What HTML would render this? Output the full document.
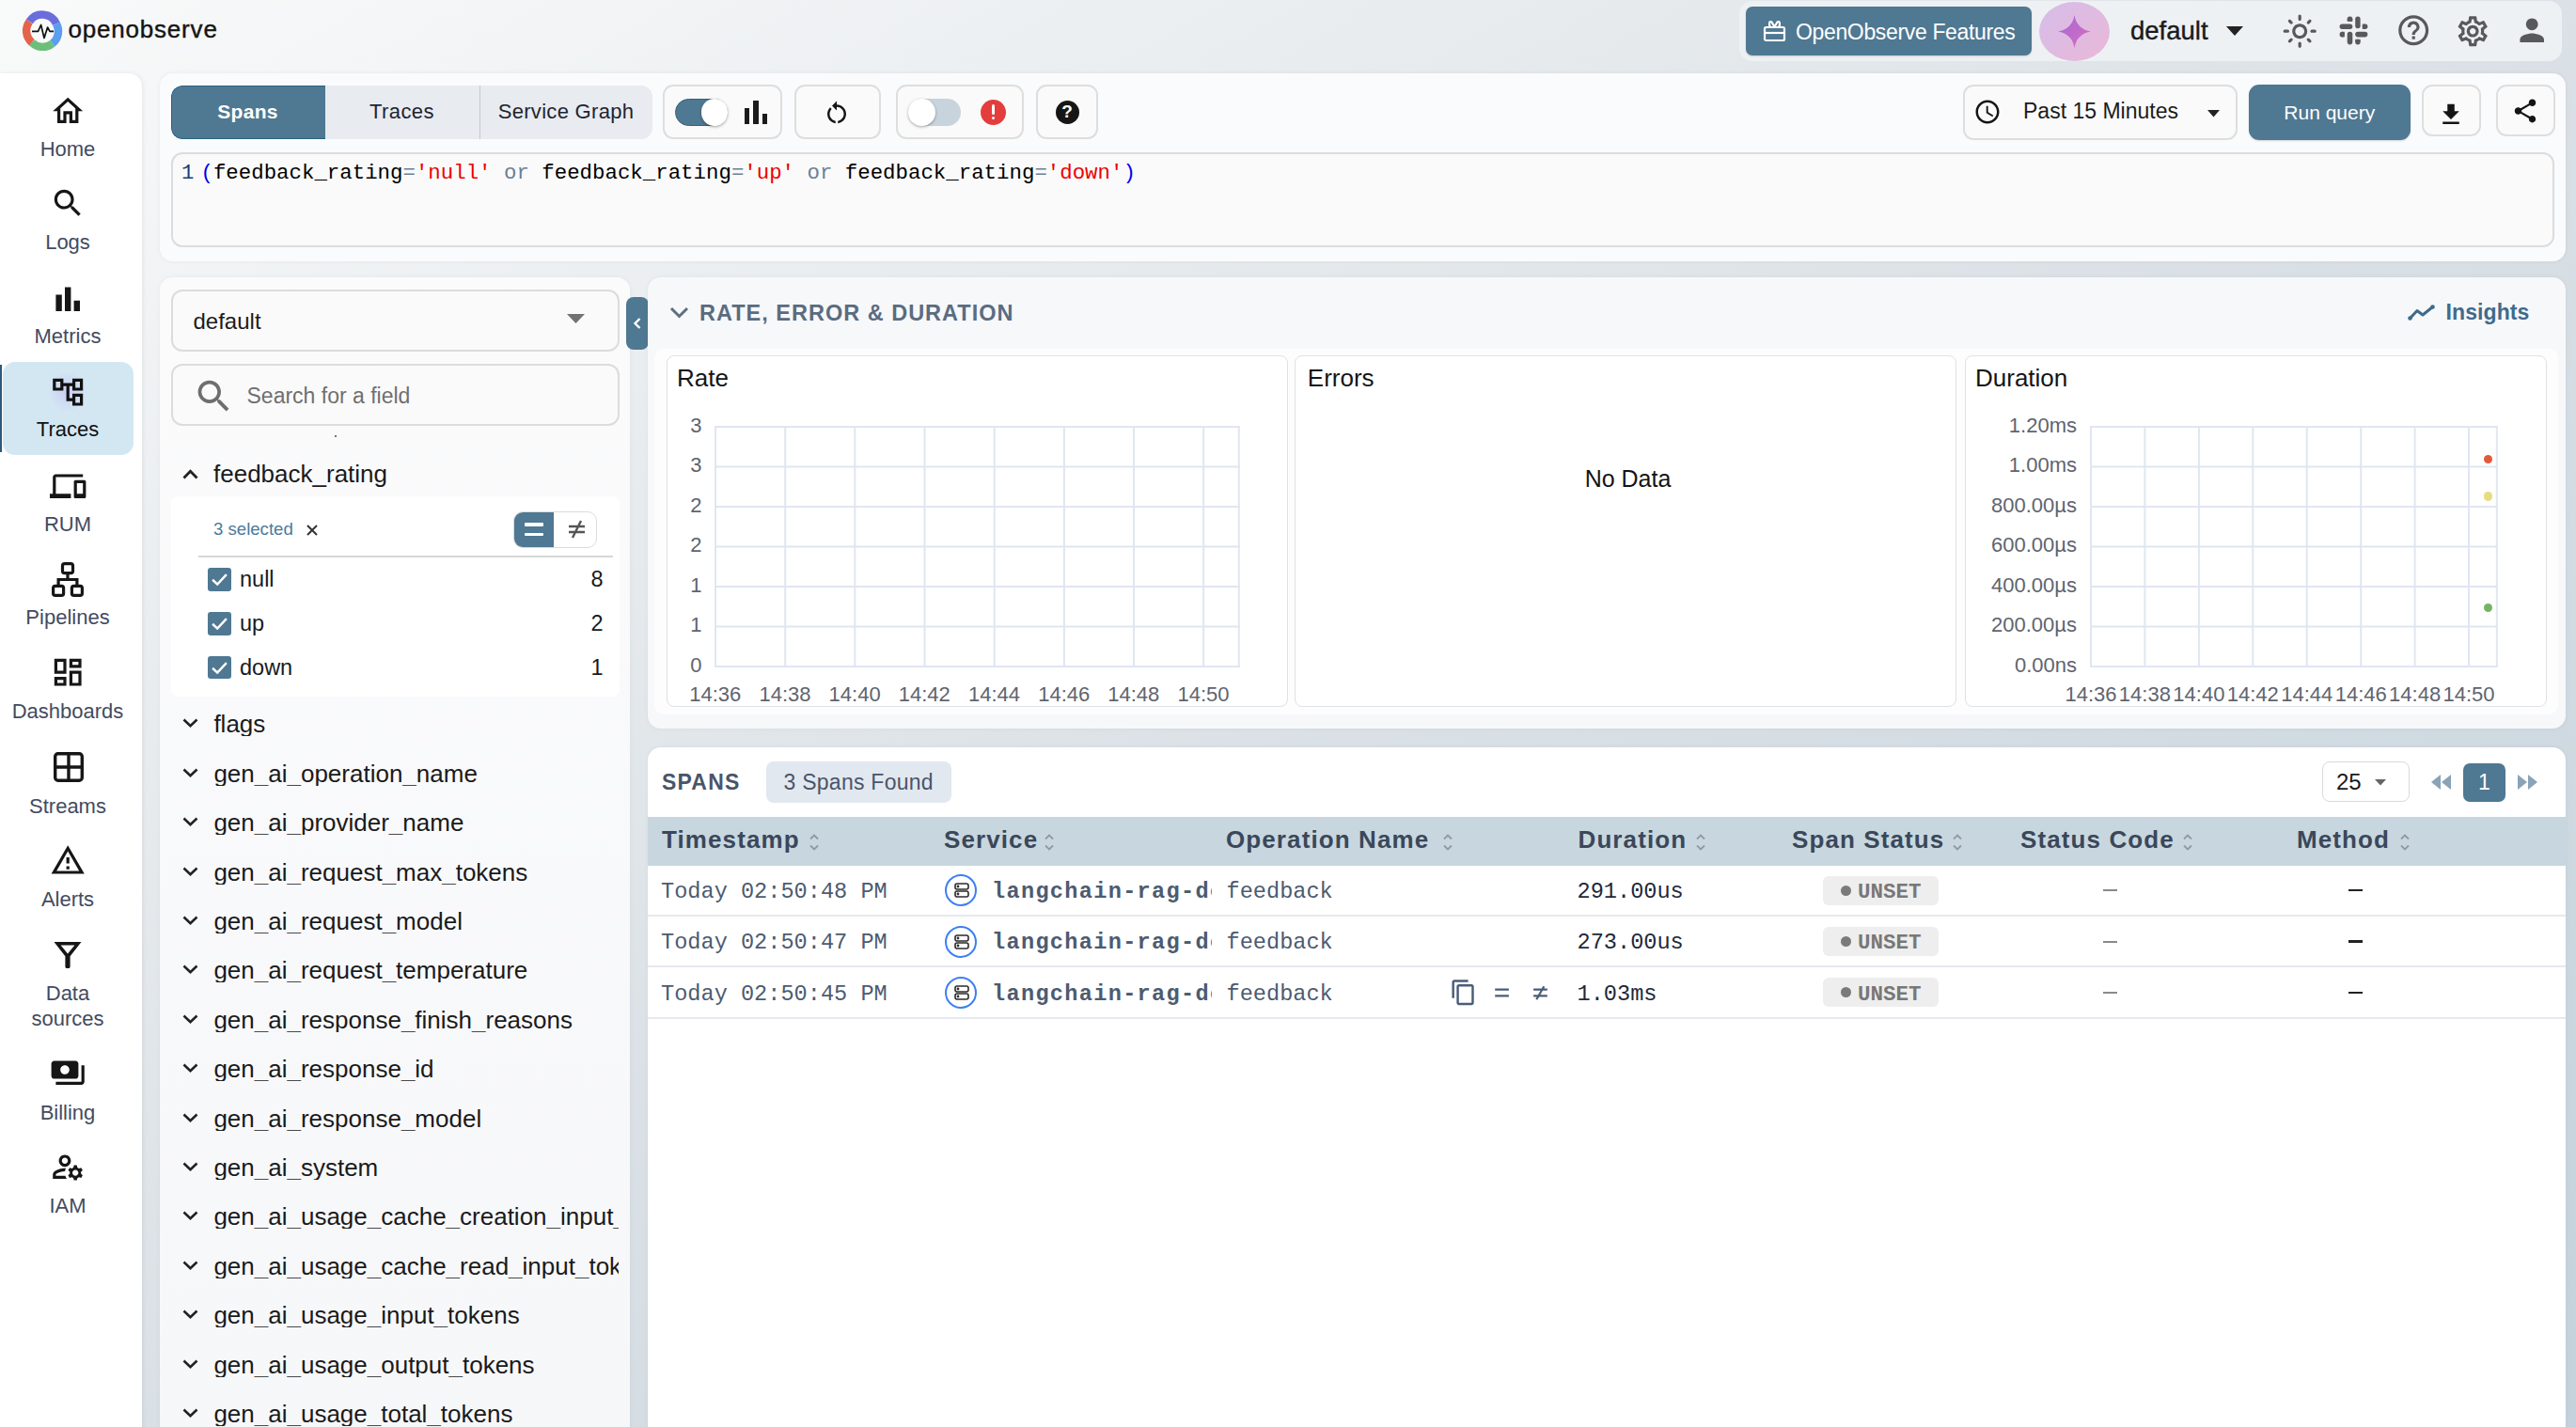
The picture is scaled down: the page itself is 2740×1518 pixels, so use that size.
<!DOCTYPE html>
<html><head><meta charset="utf-8">
<style>
*{box-sizing:border-box;margin:0;padding:0}
html,body{width:2740px;height:1518px;overflow:hidden}
body{position:relative;font-family:"Liberation Sans",sans-serif;color:#1f2937;
 background:linear-gradient(to bottom right,#f9fafa 0%,#dbe1e6 50%,#c3d2dc 100%)}
.a{position:absolute}
.t{position:absolute;white-space:nowrap;line-height:1}
.m{font-family:"Liberation Mono",monospace}
.panel{position:absolute;border-radius:14px}
svg{position:absolute;overflow:visible}
.nt{position:absolute;left:0;width:144px;text-align:center;font-size:22px;line-height:1;color:#434b60;white-space:nowrap}

</style></head><body>
<!-- LOGO -->
<svg style="left:0;top:0" width="80" height="70" viewBox="0 0 80 70">
 <g fill="none" stroke-width="8.4">
  <path d="M31.3 22.9 A16.4 16.4 0 0 1 59.9 25.2" stroke="#6a6ddb"/>
  <path d="M59.9 25.2 A16.4 16.4 0 0 1 55.8 46.2" stroke="#5b9def"/>
  <path d="M55.8 46.2 A16.4 16.4 0 0 1 33.9 45.2" stroke="#6cbf7a"/>
  <path d="M33.9 45.2 A16.4 16.4 0 0 1 31.3 22.9" stroke="#e4634b"/>
 </g>
 <polyline points="34,33.4 40.5,33.4 43.6,26.5 47,40.5 50.6,29 53,33.4 57,33.4" fill="none" stroke="#111" stroke-width="1.7" stroke-linejoin="round"/>
</svg>
<div class="t" style="left:72.5px;top:18.4px;font-size:26px;color:#151515;-webkit-text-stroke:0.4px #151515;letter-spacing:0.8px">openobserve</div>

<!-- HEADER RIGHT BOX -->
<div class="a" style="left:1850px;top:1px;width:875px;height:64px;border-radius:14px;background:#eef1f4"></div>
<div class="a" style="left:1857px;top:7px;width:304px;height:52px;border-radius:7px;background:#4f7892;box-shadow:0 1px 2px rgba(0,0,0,.15)"></div>
<svg style="left:1875px;top:20px" width="26" height="26" viewBox="0 0 26 26">
 <g fill="none" stroke="#fff" stroke-width="2.2">
  <rect x="2" y="9" width="21" height="14" rx="1.5"/>
  <line x1="2" y1="15" x2="23" y2="15"/>
  <path d="M8 9 C6 5, 7 2, 9.5 3.5 L12.5 8.5 M17 9 C19 5, 18 2, 15.5 3.5 L12.5 8.5"/>
 </g>
</svg>
<div class="t" style="left:1910px;top:22.5px;font-size:23px;color:#fff;letter-spacing:-0.35px">OpenObserve Features</div>
<div class="a" style="left:2169px;top:2px;width:75px;height:63px;border-radius:50%;background:linear-gradient(135deg,#d6bde9,#e9b8d8)"></div>
<svg style="left:2189px;top:15.5px" width="35" height="35" viewBox="0 0 35 35">
 <defs><linearGradient id="stg" x1="0" y1="0" x2="1" y2="1"><stop offset="0" stop-color="#a866d6"/><stop offset="1" stop-color="#d56fc0"/></linearGradient></defs>
 <path d="M17.5 0 Q20 15 35 17.5 Q20 20 17.5 35 Q15 20 0 17.5 Q15 15 17.5 0Z" fill="url(#stg)"/>
</svg>
<div class="t" style="left:2266px;top:19px;font-size:27.5px;color:#1b1b1b;-webkit-text-stroke:0.4px #1b1b1b">default</div>
<svg style="left:2368px;top:28px" width="18" height="10" viewBox="0 0 18 10"><path d="M0 0H18L9 10Z" fill="#222"/></svg>

<svg style="left:2427.4px;top:13.8px" width="38.4" height="38.4" viewBox="0 0 24 24" fill="#58595c"><path d="M12 9c1.65 0 3 1.35 3 3s-1.35 3-3 3-3-1.35-3-3 1.35-3 3-3m0-2c-2.76 0-5 2.24-5 5s2.24 5 5 5 5-2.24 5-5-2.24-5-5-5zM2 13h2c.55 0 1-.45 1-1s-.45-1-1-1H2c-.55 0-1 .45-1 1s.45 1 1 1zm18 0h2c.55 0 1-.45 1-1s-.45-1-1-1h-2c-.55 0-1 .45-1 1s.45 1 1 1zM11 2v2c0 .55.45 1 1 1s1-.45 1-1V2c0-.55-.45-1-1-1s-1 .45-1 1zm0 18v2c0 .55.45 1 1 1s1-.45 1-1v-2c0-.55-.45-1-1-1s-1 .45-1 1zM5.99 4.58c-.39-.39-1.03-.39-1.41 0-.39.39-.39 1.03 0 1.41l1.06 1.06c.39.39 1.03.39 1.41 0s.39-1.03 0-1.41L5.99 4.58zm12.37 12.37c-.39-.39-1.03-.39-1.41 0-.39.39-.39 1.03 0 1.41l1.06 1.06c.39.39 1.03.39 1.41 0 .39-.39.39-1.03 0-1.41l-1.06-1.06zm1.06-10.96c.39-.39.39-1.03 0-1.41-.39-.39-1.03-.39-1.41 0l-1.06 1.06c-.39.39-.39 1.03 0 1.41s1.03.39 1.41 0l1.06-1.06zM7.05 18.36c.39-.39.39-1.03 0-1.41-.39-.39-1.03-.39-1.41 0l-1.06 1.06c-.39.39-.39 1.03 0 1.41s1.03.39 1.41 0l1.06-1.06z"/></svg>
<svg style="left:2488px;top:16.8px" width="31" height="31" viewBox="0 0 31 31" fill="#58595c">
 <rect x="8.7" y="0.6" width="5.6" height="5.2" rx="2.6"/><rect x="8.7" y="3" width="5.6" height="2.8"/>
 <rect x="17.2" y="0.6" width="5.4" height="12.6" rx="2.7"/>
 <rect x="0.6" y="8.6" width="13.7" height="5.3" rx="2.65"/>
 <rect x="24.8" y="8.6" width="5.6" height="5.3" rx="2.6"/><rect x="24.8" y="8.6" width="2.8" height="5.3"/>
 <rect x="17.2" y="16.8" width="13.2" height="5.6" rx="2.8"/>
 <rect x="0.6" y="16.8" width="5.2" height="5.6" rx="2.6"/><rect x="3" y="16.8" width="2.8" height="5.6"/>
 <rect x="8.7" y="16.8" width="5.6" height="13.6" rx="2.8"/>
 <rect x="17.2" y="24.8" width="5.4" height="5.6" rx="2.7"/><rect x="17.2" y="24.8" width="5.4" height="2.8"/>
</svg>
<svg style="left:2548.3px;top:13.1px" width="38.4" height="38.4" viewBox="0 0 24 24" fill="#58595c"><path d="M11 18h2v-2h-2v2zm1-16C6.48 2 2 6.48 2 12s4.48 10 10 10 10-4.48 10-10S17.52 2 12 2zm0 18c-4.41 0-8-3.59-8-8s3.59-8 8-8 8 3.59 8 8-3.59 8-8 8zm0-14c-2.21 0-4 1.79-4 4h2c0-1.1.9-2 2-2s2 .9 2 2c0 2-3 1.75-3 5h2c0-2.25 3-2.5 3-5 0-2.21-1.79-4-4-4z"/></svg>
<svg style="left:2611.3px;top:13.8px" width="38.4" height="38.4" viewBox="0 0 24 24" fill="#58595c"><path d="M19.43 12.98c.04-.32.07-.64.07-.98 0-.34-.03-.66-.07-.98l2.11-1.65c.19-.15.24-.42.12-.64l-2-3.46c-.09-.16-.26-.25-.44-.25-.06 0-.12.01-.17.03l-2.49 1c-.52-.4-1.08-.73-1.69-.98l-.38-2.65C14.46 2.18 14.25 2 14 2h-4c-.25 0-.46.18-.49.42l-.38 2.65c-.61.25-1.17.59-1.69.98l-2.49-1c-.06-.02-.12-.03-.18-.03-.17 0-.34.09-.43.25l-2 3.46c-.13.22-.07.49.12.64l2.11 1.65c-.04.32-.07.65-.07.98 0 .33.03.66.07.98l-2.11 1.65c-.19.15-.24.42-.12.64l2 3.46c.09.16.26.25.44.25.06 0 .12-.01.17-.03l2.49-1c.52.4 1.08.73 1.69.98l.38 2.65c.03.24.24.42.49.42h4c.25 0 .46-.18.49-.42l.38-2.65c.61-.25 1.17-.59 1.69-.98l2.49 1c.06.02.12.03.18.03.17 0 .34-.09.43-.25l2-3.46c.12-.22.07-.49-.12-.64l-2.11-1.65zm-1.98-1.71c.04.31.05.52.05.73 0 .21-.02.43-.05.73l-.14 1.13.89.7 1.08.84-.7 1.21-1.27-.51-1.04-.42-.9.68c-.43.32-.84.56-1.25.73l-1.06.43-.16 1.13-.2 1.35h-1.4l-.19-1.35-.16-1.13-1.06-.43c-.43-.18-.83-.41-1.23-.71l-.91-.7-1.06.43-1.27.51-.7-1.21 1.08-.84.89-.7-.14-1.13c-.03-.31-.05-.54-.05-.74s.02-.43.05-.73l.14-1.13-.89-.7-1.08-.84.7-1.21 1.27.51 1.04.42.9-.68c.43-.32.84-.56 1.25-.73l1.06-.43.16-1.13.2-1.35h1.39l.19 1.35.16 1.13 1.06.43c.43.18.83.41 1.23.71l.91.7 1.06-.43 1.27-.51.7 1.21-1.07.85-.89.7.14 1.13zM12 8c-2.21 0-4 1.79-4 4s1.79 4 4 4 4-1.79 4-4-1.79-4-4-4zm0 6c-1.1 0-2-.9-2-2s.9-2 2-2 2 .9 2 2-.9 2-2 2z"/></svg>
<svg style="left:2673.8px;top:12.7px" width="38.4" height="38.4" viewBox="0 0 24 24" fill="#58595c"><path d="M12 12c2.21 0 4-1.79 4-4s-1.79-4-4-4-4 1.79-4 4 1.79 4 4 4zm0 2c-2.67 0-8 1.34-8 4v2h16v-2c0-2.66-5.33-4-8-4z"/></svg>

<!-- NAV -->
<div class="a" style="left:0;top:78px;width:151px;height:1460px;background:#fff;border-radius:0 14px 0 0;box-shadow:1px 0 5px rgba(0,0,0,.07)"></div>
<div class="a" style="left:3px;top:385px;width:139px;height:99px;border-radius:13px;background:#d3e7f3"></div>
<div class="a" style="left:0;top:388px;width:2px;height:93px;background:#2d5a7a"></div>
<div class="a" style="left:50px;top:395px;width:44px;height:44px;border-radius:50%;background:radial-gradient(circle,rgba(200,200,245,.8),rgba(210,231,243,0) 70%)"></div>

<svg style="left:52.8px;top:99.2px" width="38.4" height="38.4" viewBox="0 0 24 24" fill="#161616"><path d="M12 5.69l5 4.5V18h-2v-6H9v6H7v-7.81l5-4.5M12 3L2 12h3v8h6v-6h2v6h6v-8h3L12 3z"/></svg>
<div class="nt" style="top:147.7px">Home</div>

<svg style="left:52.8px;top:197.2px" width="38.4" height="38.4" viewBox="0 0 24 24" fill="#161616"><path d="M15.5 14h-.79l-.28-.27C15.41 12.59 16 11.11 16 9.5 16 5.91 13.09 3 9.5 3S3 5.91 3 9.5 5.91 16 9.5 16c1.61 0 3.09-.59 4.23-1.57l.27.28v.79l5 4.99L20.49 19l-4.99-5zm-6 0C7.01 14 5 11.99 5 9.5S7.01 5 9.5 5 14 7.01 14 9.5 11.99 14 9.5 14z"/></svg>
<div class="nt" style="top:246.9px">Logs</div>

<svg style="left:52.8px;top:298.6px" width="38.4" height="38.4" viewBox="0 0 24 24" fill="#161616"><path d="M4 9h4v11H4zm12 4h4v7h-4zm-6-9h4v16h-4z"/></svg>
<div class="nt" style="top:347.2px">Metrics</div>

<svg style="left:52.8px;top:398px" width="38.4" height="38.4" viewBox="0 0 24 24" fill="#111"><path d="M22 11V3h-7v3H9V3H2v8h7V8h2v10h4v3h7v-8h-7v3h-2V8h2v3h7zM7 9H4V5h3v4zm10 6h3v4h-3v-4zm0-10h3v4h-3V5z"/></svg>
<div class="nt" style="top:446.2px;color:#111">Traces</div>

<svg style="left:52.8px;top:498.3px" width="38.4" height="38.4" viewBox="0 0 24 24" fill="#161616"><path d="M4 6h18V4H4c-1.1 0-2 .9-2 2v11H0v3h14v-3H4V6zm19 2h-6c-.55 0-1 .45-1 1v10c0 .55.45 1 1 1h6c.55 0 1-.45 1-1V9c0-.55-.45-1-1-1zm-1 9h-4v-7h4v7z"/></svg>
<div class="nt" style="top:547.4px">RUM</div>

<svg style="left:55px;top:598px" width="34" height="37" viewBox="0 0 34 37" fill="none" stroke="#161616" stroke-width="3.2">
 <rect x="11.5" y="1.6" width="11" height="10" rx="2.2"/>
 <rect x="1.6" y="25.4" width="11" height="10" rx="2.2"/>
 <rect x="21.4" y="25.4" width="11" height="10" rx="2.2"/>
 <path d="M17 11.6V18.5M7.1 25.4V18.5H26.9V25.4"/>
</svg>
<div class="nt" style="top:646.4px">Pipelines</div>

<svg style="left:52.8px;top:696.2px" width="38.4" height="38.4" viewBox="0 0 24 24" fill="#161616"><path d="M19 5v2h-4V5h4M9 5v6H5V5h4m10 8v6h-4v-6h4M9 17v2H5v-2h4M21 3h-8v6h8V3zM11 3H3v10h8V3zm10 8h-8v10h8V11zm-10 4H3v6h8v-6z"/></svg>
<div class="nt" style="top:745.9px">Dashboards</div>

<svg style="left:56.5px;top:800px" width="32" height="32" viewBox="0 0 32 32" fill="none" stroke="#161616" stroke-width="3.4">
 <rect x="1.7" y="1.7" width="28.6" height="28.6" rx="3"/>
 <path d="M16 1.7V30.3M1.7 16H30.3"/>
</svg>
<div class="nt" style="top:846.8px">Streams</div>

<svg style="left:52.8px;top:895.8px" width="38.4" height="38.4" viewBox="0 0 24 24" fill="#161616"><path d="M12 5.99L19.53 19H4.47L12 5.99M12 2L1 21h22L12 2zm1 14h-2v2h2v-2zm0-6h-2v4h2v-4z"/></svg>
<div class="nt" style="top:946px">Alerts</div>

<svg style="left:57px;top:1002px" width="30" height="28" viewBox="0 0 30 28" fill="#161616"><path d="M0.5 0H29.5L17.6 15.2V26.2C17.6 27.2 16.8 28 15.8 28H14.2C13.2 28 12.4 27.2 12.4 26.2V15.2ZM7.6 3.6L15 12.6L22.4 3.6Z" fill-rule="evenodd"/></svg>
<div class="nt" style="top:1046.4px">Data</div>
<div class="nt" style="top:1073.1px">sources</div>

<svg style="left:52.8px;top:1121.6px" width="38.4" height="38.4" viewBox="0 0 24 24" fill="#161616"><path d="M19 14V6c0-1.1-.9-2-2-2H3c-1.1 0-2 .9-2 2v8c0 1.1.9 2 2 2h14c1.1 0 2-.9 2-2zm-9-1c-1.66 0-3-1.34-3-3s1.34-3 3-3 3 1.34 3 3-1.34 3-3 3zm13-6v11c0 1.1-.9 2-2 2H4v-2h17V7h2z"/></svg>
<div class="nt" style="top:1172.9px">Billing</div>

<svg style="left:52.8px;top:1221.6px" width="38.4" height="38.4" viewBox="0 0 24 24" fill="#161616"><path d="M4 18v-.65c0-.34.16-.66.41-.81C6.1 15.53 8.03 15 10 15c.03 0 .05 0 .08.01.1-.7.3-1.37.59-1.98-.22-.02-.44-.03-.67-.03-2.42 0-4.68.67-6.61 1.82-.88.52-1.39 1.5-1.39 2.53V20h9.26c-.42-.6-.75-1.28-.97-2H4zM10 12c2.21 0 4-1.79 4-4s-1.79-4-4-4-4 1.79-4 4 1.79 4 4 4zm0-6c1.1 0 2 .9 2 2s-.9 2-2 2-2-.9-2-2 .9-2 2-2zM20.75 16c0-.22-.03-.42-.06-.63l1.14-1.01-1-1.73-1.45.49c-.32-.27-.68-.48-1.08-.63L18 11h-2l-.3 1.49c-.4.15-.76.36-1.08.63l-1.45-.49-1 1.73 1.14 1.01c-.03.21-.06.41-.06.63s.03.42.06.63l-1.14 1.01 1 1.73 1.45-.49c.32.27.68.48 1.08.63L16 21h2l.3-1.49c.4-.15.76-.36 1.08-.63l1.45.49 1-1.73-1.14-1.01c.03-.21.06-.41.06-.63zM17 18c-1.1 0-2-.9-2-2s.9-2 2-2 2 .9 2 2-.9 2-2 2z"/></svg>
<div class="nt" style="top:1272.1px">IAM</div>

<!-- QUERY PANEL -->
<div class="a" style="left:170px;top:78px;width:2559px;height:200px;background:#fafbfc;border-radius:14px;box-shadow:0 0 5px rgba(0,0,0,.06)"></div>
<!-- tabs -->
<div class="a" style="left:181.5px;top:91px;width:512px;height:57px;border-radius:12px;background:#e8ebf0;overflow:hidden">
 <div class="a" style="left:0;top:0;width:164px;height:57px;background:#4f7892;border:1.5px solid #2a6284;border-right:none;border-radius:12px 0 0 12px"></div>
 <div class="a" style="left:328px;top:0;width:1.5px;height:57px;background:#c4c9d0"></div>
</div>
<div class="t" style="left:181.5px;width:164px;text-align:center;top:108px;font-size:21px;font-weight:bold;color:#fff;letter-spacing:0.3px">Spans</div>
<div class="t" style="left:345.5px;width:164px;text-align:center;top:107.6px;font-size:22px;color:#1f2430;letter-spacing:0.4px">Traces</div>
<div class="t" style="left:510px;width:184px;text-align:center;top:107.6px;font-size:22px;color:#1f2430;letter-spacing:0.3px">Service Graph</div>

<!-- chart toggle group -->
<div class="a" style="left:705px;top:90px;width:127px;height:58px;border-radius:11px;border:2px solid #dedede;background:#fafafa"></div>
<div class="a" style="left:718px;top:105px;width:56px;height:29px;border-radius:15px;background:#4f7892;border:1.5px solid #36607c"></div>
<div class="a" style="left:745.5px;top:105px;width:28.5px;height:28.5px;border-radius:50%;background:#fff;box-shadow:0 1px 3px rgba(0,0,0,.35)"></div>
<div class="a" style="left:791.9px;top:114.8px;width:5.5px;height:16.8px;background:#1b1b1b"></div><div class="a" style="left:801.4px;top:107.4px;width:5.5px;height:24.2px;background:#1b1b1b"></div><div class="a" style="left:810.9px;top:121.3px;width:5.5px;height:10.3px;background:#1b1b1b"></div>

<!-- refresh group -->
<div class="a" style="left:844.5px;top:90px;width:92px;height:58px;border-radius:11px;border:2px solid #dedede;background:#fafafa"></div>
<svg style="left:874.8px;top:104.9px" width="30" height="30" viewBox="0 0 24 24" fill="#151515"><path d="M12 5V2L8 6l4 4V7c3.31 0 6 2.69 6 6 0 2.97-2.17 5.43-5 5.91v2.02c3.95-.49 7-3.85 7-7.93 0-4.42-3.58-8-8-8zm-6 8c0-1.65.67-3.15 1.76-4.24L6.34 7.34C4.9 8.79 4 10.79 4 13c0 4.08 3.05 7.44 7 7.93v-2.02c-2.83-.48-5-2.94-5-5.91z"/></svg>

<!-- error toggle group -->
<div class="a" style="left:952.5px;top:90px;width:136px;height:58px;border-radius:11px;border:2px solid #dedede;background:#fafafa"></div>
<div class="a" style="left:967px;top:105px;width:55px;height:29px;border-radius:15px;background:#c7d4dd"></div>
<div class="a" style="left:966px;top:105px;width:28.5px;height:28.5px;border-radius:50%;background:#fff;box-shadow:0 1px 3px rgba(0,0,0,.35)"></div>
<div class="a" style="left:1043.2px;top:105.5px;width:27px;height:27px;border-radius:50%;background:#e43d3d"></div>
<div class="a" style="left:1055.2px;top:110.5px;width:3.2px;height:11px;border-radius:1.5px;background:#fff"></div>
<div class="a" style="left:1055.2px;top:124px;width:3.2px;height:3.2px;border-radius:50%;background:#fff"></div>

<!-- help group -->
<div class="a" style="left:1101.5px;top:90px;width:66px;height:58px;border-radius:11px;border:2px solid #dedede;background:#fafafa"></div>
<div class="a" style="left:1122.5px;top:106.5px;width:25px;height:25px;border-radius:50%;background:#161616"></div>
<div class="t" style="left:1122.5px;width:25px;text-align:center;top:109px;font-size:19px;font-weight:bold;color:#fff">?</div>

<!-- time picker -->
<div class="a" style="left:2087.5px;top:90px;width:292.5px;height:58.5px;border-radius:11px;border:2px solid #dedede;background:#fafafa"></div>
<svg style="left:2098.9px;top:104px" width="30" height="30" viewBox="0 0 24 24" fill="#141414"><path d="M11.99 2C6.47 2 2 6.48 2 12s4.47 10 9.99 10C17.52 22 22 17.52 22 12S17.52 2 11.99 2zM12 20c-4.42 0-8-3.58-8-8s3.58-8 8-8 8 3.58 8 8-3.58 8-8 8zm.5-13H11v6l5.25 3.15.75-1.23-4.5-2.67z"/></svg>
<div class="t" style="left:2152px;top:107px;font-size:23px;color:#1b1b1b">Past 15 Minutes</div>
<svg style="left:2348px;top:116.5px" width="13" height="8" viewBox="0 0 13 8"><path d="M0 0H13L6.5 7.5Z" fill="#222"/></svg>

<!-- run query -->
<div class="a" style="left:2392px;top:90px;width:171.5px;height:58.5px;border-radius:11px;background:#4f7892;box-shadow:0 1px 2px rgba(0,0,0,.15)"></div>
<div class="t" style="left:2392px;width:171.5px;text-align:center;top:108.5px;font-size:21px;color:#fff">Run query</div>

<!-- download / share -->
<div class="a" style="left:2575.5px;top:90px;width:63px;height:55px;border-radius:11px;border:2px solid #dedede;background:#fafafa"></div>
<svg style="left:2592.2px;top:106.5px" width="30" height="30" viewBox="0 0 24 24" fill="#141414"><path d="M19 9h-4V3H9v6H5l7 7 7-7zM5 18v2h14v-2H5z"/></svg>
<div class="a" style="left:2654.5px;top:90px;width:63px;height:55px;border-radius:11px;border:2px solid #dedede;background:#fafafa"></div>
<svg style="left:2670.5px;top:103.2px" width="30" height="30" viewBox="0 0 24 24" fill="#141414"><path d="M18 16.08c-.76 0-1.44.3-1.96.77L8.91 12.7c.05-.23.09-.46.09-.7s-.04-.47-.09-.7l7.05-4.11c.54.5 1.25.81 2.04.81 1.66 0 3-1.34 3-3s-1.34-3-3-3-3 1.34-3 3c0 .24.04.47.09.7L8.04 9.81C7.5 9.31 6.79 9 6 9c-1.66 0-3 1.34-3 3s1.34 3 3 3c.79 0 1.5-.31 2.04-.81l7.12 4.16c-.05.21-.08.43-.08.65 0 1.61 1.31 2.92 2.92 2.92 1.61 0 2.92-1.31 2.92-2.92s-1.31-2.92-2.92-2.92z"/></svg>

<!-- query editor -->
<div class="a" style="left:182px;top:161.5px;width:2535px;height:101.5px;border-radius:12px;border:2px solid #dcdcdc;background:#fafafa"></div>
<div class="t m" style="left:193px;top:172.8px;font-size:22.4px;color:#1c3f78">1</div><div class="t m" style="left:213.5px;top:172.8px;font-size:22.4px;color:#000;white-space:pre"><span style="color:#0000ee">(</span>feedback_rating<span style="color:#6b7f94">=</span><span style="color:#e00">'null'</span> <span style="color:#6b7f94">or</span> feedback_rating<span style="color:#6b7f94">=</span><span style="color:#e00">'up'</span> <span style="color:#6b7f94">or</span> feedback_rating<span style="color:#6b7f94">=</span><span style="color:#e00">'down'</span><span style="color:#0000ee">)</span></div>

<!-- FIELD PANEL -->
<div class="a" style="left:170px;top:295px;width:499.5px;height:1260px;background:linear-gradient(180deg,#fbfbfc,#f6f7f9);border-radius:14px;box-shadow:0 0 5px rgba(0,0,0,.05)"></div>
<div class="a" style="left:181.5px;top:307.5px;width:477px;height:66px;border-radius:12px;border:2px solid #dcdcdc;background:#fafafa"></div>
<div class="t" style="left:205.5px;top:330.3px;font-size:24px;color:#1c1c1c">default</div>
<svg style="left:603px;top:334px" width="19" height="10" viewBox="0 0 19 10"><path d="M0 0H19L9.5 10Z" fill="#727272"/></svg>
<div class="a" style="left:666px;top:316px;width:23.5px;height:55.5px;border-radius:8px;background:#4f7892"></div>
<svg style="left:671px;top:336px" width="14" height="16" viewBox="0 0 14 16"><path d="M9.5 3L4.5 8L9.5 13" fill="none" stroke="#fff" stroke-width="2.4"/></svg>
<div class="a" style="left:181.5px;top:386.5px;width:477px;height:66px;border-radius:12px;border:2px solid #dcdcdc;background:#fafafa"></div>
<svg style="left:205.4px;top:399.4px" width="45" height="45" viewBox="0 0 24 24" fill="#6e6e6e"><path d="M15.5 14h-.79l-.28-.27C15.41 12.59 16 11.11 16 9.5 16 5.91 13.09 3 9.5 3S3 5.91 3 9.5 5.91 16 9.5 16c1.61 0 3.09-.59 4.23-1.57l.27.28v.79l5 4.99L20.49 19l-4.99-5zm-6 0C7.01 14 5 11.99 5 9.5S7.01 5 9.5 5 14 7.01 14 9.5 11.99 14 9.5 14z"/></svg>
<div class="t" style="left:262.5px;top:409.5px;font-size:23px;color:#6f6f6f">Search for a field</div>
<div class="a" style="left:356px;top:463px;width:2px;height:2px;background:#444;border-radius:50%"></div>

<svg style="left:194px;top:498px" width="17" height="12" viewBox="0 0 17 12"><path d="M1.5 10.5L8.5 3.2L15.5 10.5" fill="none" stroke="#222" stroke-width="2.8"/></svg>
<div class="t" style="left:227px;top:490.8px;font-size:26px;color:#1a1a1a">feedback_rating</div>

<div class="a" style="left:181.5px;top:528px;width:477px;height:213px;border-radius:8px;background:#fff"></div>
<div class="t" style="left:227px;top:553.6px;font-size:18.6px;color:#4a7b9d">3 selected</div>
<svg style="left:325px;top:557px" width="14" height="14" viewBox="0 0 14 14"><path d="M2 2L12 12M12 2L2 12" stroke="#333" stroke-width="2"/></svg>
<div class="a" style="left:545.5px;top:544px;width:89.5px;height:39px;border-radius:10px;border:1.5px solid #dcdcdc;background:#fff;overflow:hidden">
 <div class="a" style="left:0;top:0;width:42px;height:39px;background:#4f7892"></div>
</div>
<div class="a" style="left:557.5px;top:556px;width:20px;height:3.8px;background:#fff;border-radius:1px"></div>
<div class="a" style="left:557.5px;top:566.5px;width:20px;height:3.8px;background:#fff;border-radius:1px"></div>
<svg style="left:603.5px;top:553px" width="19" height="20" viewBox="0 0 19 20"><path d="M1 7H18M1 13H18M14 1L5 19" stroke="#555" stroke-width="2.4" fill="none"/></svg>
<div class="a" style="left:211px;top:591px;width:440.5px;height:1.5px;background:#d6d6d6"></div>

<div class="a" style="left:221px;top:604px;width:24.5px;height:24.5px;border-radius:3px;background:#4f7892"></div>
<svg style="left:221px;top:604px" width="24.5" height="24.5" viewBox="0 0 24 24"><path d="M5 12.5L10 17.2L19.5 7" fill="none" stroke="#fff" stroke-width="2.4"/></svg>
<div class="t" style="left:255px;top:604.9px;font-size:23.5px;color:#1a1a1a">null</div>
<div class="t" style="left:541.5px;width:100px;text-align:right;top:604.9px;font-size:23.5px;color:#1a1a1a">8</div>
<div class="a" style="left:221px;top:651px;width:24.5px;height:24.5px;border-radius:3px;background:#4f7892"></div>
<svg style="left:221px;top:651px" width="24.5" height="24.5" viewBox="0 0 24 24"><path d="M5 12.5L10 17.2L19.5 7" fill="none" stroke="#fff" stroke-width="2.4"/></svg>
<div class="t" style="left:255px;top:651.9px;font-size:23.5px;color:#1a1a1a">up</div>
<div class="t" style="left:541.5px;width:100px;text-align:right;top:651.9px;font-size:23.5px;color:#1a1a1a">2</div>
<div class="a" style="left:221px;top:697.8px;width:24.5px;height:24.5px;border-radius:3px;background:#4f7892"></div>
<svg style="left:221px;top:697.8px" width="24.5" height="24.5" viewBox="0 0 24 24"><path d="M5 12.5L10 17.2L19.5 7" fill="none" stroke="#fff" stroke-width="2.4"/></svg>
<div class="t" style="left:255px;top:698.7px;font-size:23.5px;color:#1a1a1a">down</div>
<div class="t" style="left:541.5px;width:100px;text-align:right;top:698.7px;font-size:23.5px;color:#1a1a1a">1</div>
<svg style="left:194px;top:763.3px" width="17" height="12" viewBox="0 0 17 12"><path d="M1.5 2.5L8.5 9.3L15.5 2.5" fill="none" stroke="#222" stroke-width="2.6"/></svg>
<div class="t" style="left:227.4px;top:757.3px;font-size:26px;color:#1a1a1a;width:431px;overflow:hidden">flags</div>
<svg style="left:194px;top:815.7px" width="17" height="12" viewBox="0 0 17 12"><path d="M1.5 2.5L8.5 9.3L15.5 2.5" fill="none" stroke="#222" stroke-width="2.6"/></svg>
<div class="t" style="left:227.4px;top:809.7px;font-size:26px;color:#1a1a1a;width:431px;overflow:hidden">gen_ai_operation_name</div>
<svg style="left:194px;top:868.1px" width="17" height="12" viewBox="0 0 17 12"><path d="M1.5 2.5L8.5 9.3L15.5 2.5" fill="none" stroke="#222" stroke-width="2.6"/></svg>
<div class="t" style="left:227.4px;top:862.1px;font-size:26px;color:#1a1a1a;width:431px;overflow:hidden">gen_ai_provider_name</div>
<svg style="left:194px;top:920.5px" width="17" height="12" viewBox="0 0 17 12"><path d="M1.5 2.5L8.5 9.3L15.5 2.5" fill="none" stroke="#222" stroke-width="2.6"/></svg>
<div class="t" style="left:227.4px;top:914.5px;font-size:26px;color:#1a1a1a;width:431px;overflow:hidden">gen_ai_request_max_tokens</div>
<svg style="left:194px;top:972.9px" width="17" height="12" viewBox="0 0 17 12"><path d="M1.5 2.5L8.5 9.3L15.5 2.5" fill="none" stroke="#222" stroke-width="2.6"/></svg>
<div class="t" style="left:227.4px;top:966.9px;font-size:26px;color:#1a1a1a;width:431px;overflow:hidden">gen_ai_request_model</div>
<svg style="left:194px;top:1025.3px" width="17" height="12" viewBox="0 0 17 12"><path d="M1.5 2.5L8.5 9.3L15.5 2.5" fill="none" stroke="#222" stroke-width="2.6"/></svg>
<div class="t" style="left:227.4px;top:1019.3px;font-size:26px;color:#1a1a1a;width:431px;overflow:hidden">gen_ai_request_temperature</div>
<svg style="left:194px;top:1077.7px" width="17" height="12" viewBox="0 0 17 12"><path d="M1.5 2.5L8.5 9.3L15.5 2.5" fill="none" stroke="#222" stroke-width="2.6"/></svg>
<div class="t" style="left:227.4px;top:1071.7px;font-size:26px;color:#1a1a1a;width:431px;overflow:hidden">gen_ai_response_finish_reasons</div>
<svg style="left:194px;top:1130.1px" width="17" height="12" viewBox="0 0 17 12"><path d="M1.5 2.5L8.5 9.3L15.5 2.5" fill="none" stroke="#222" stroke-width="2.6"/></svg>
<div class="t" style="left:227.4px;top:1124.1px;font-size:26px;color:#1a1a1a;width:431px;overflow:hidden">gen_ai_response_id</div>
<svg style="left:194px;top:1182.5px" width="17" height="12" viewBox="0 0 17 12"><path d="M1.5 2.5L8.5 9.3L15.5 2.5" fill="none" stroke="#222" stroke-width="2.6"/></svg>
<div class="t" style="left:227.4px;top:1176.5px;font-size:26px;color:#1a1a1a;width:431px;overflow:hidden">gen_ai_response_model</div>
<svg style="left:194px;top:1234.9px" width="17" height="12" viewBox="0 0 17 12"><path d="M1.5 2.5L8.5 9.3L15.5 2.5" fill="none" stroke="#222" stroke-width="2.6"/></svg>
<div class="t" style="left:227.4px;top:1228.9px;font-size:26px;color:#1a1a1a;width:431px;overflow:hidden">gen_ai_system</div>
<svg style="left:194px;top:1287.3px" width="17" height="12" viewBox="0 0 17 12"><path d="M1.5 2.5L8.5 9.3L15.5 2.5" fill="none" stroke="#222" stroke-width="2.6"/></svg>
<div class="t" style="left:227.4px;top:1281.3px;font-size:26px;color:#1a1a1a;width:431px;overflow:hidden">gen_ai_usage_cache_creation_input_tokens</div>
<svg style="left:194px;top:1339.7px" width="17" height="12" viewBox="0 0 17 12"><path d="M1.5 2.5L8.5 9.3L15.5 2.5" fill="none" stroke="#222" stroke-width="2.6"/></svg>
<div class="t" style="left:227.4px;top:1333.7px;font-size:26px;color:#1a1a1a;width:431px;overflow:hidden">gen_ai_usage_cache_read_input_tokens</div>
<svg style="left:194px;top:1392.1px" width="17" height="12" viewBox="0 0 17 12"><path d="M1.5 2.5L8.5 9.3L15.5 2.5" fill="none" stroke="#222" stroke-width="2.6"/></svg>
<div class="t" style="left:227.4px;top:1386.1px;font-size:26px;color:#1a1a1a;width:431px;overflow:hidden">gen_ai_usage_input_tokens</div>
<svg style="left:194px;top:1444.5px" width="17" height="12" viewBox="0 0 17 12"><path d="M1.5 2.5L8.5 9.3L15.5 2.5" fill="none" stroke="#222" stroke-width="2.6"/></svg>
<div class="t" style="left:227.4px;top:1438.5px;font-size:26px;color:#1a1a1a;width:431px;overflow:hidden">gen_ai_usage_output_tokens</div>
<svg style="left:194px;top:1496.9px" width="17" height="12" viewBox="0 0 17 12"><path d="M1.5 2.5L8.5 9.3L15.5 2.5" fill="none" stroke="#222" stroke-width="2.6"/></svg>
<div class="t" style="left:227.4px;top:1490.9px;font-size:26px;color:#1a1a1a;width:431px;overflow:hidden">gen_ai_usage_total_tokens</div>
<!-- CHARTS PANEL -->
<div class="a" style="left:689px;top:295px;width:2039.5px;height:480px;background:#f7f8fa;border-radius:14px;box-shadow:0 0 5px rgba(0,0,0,.05)"></div>
<svg style="left:712px;top:325px" width="21" height="15" viewBox="0 0 21 15"><path d="M2 3L10.5 11.5L19 3" fill="none" stroke="#5d6f82" stroke-width="3"/></svg>
<div class="t" style="left:744px;top:322.3px;font-size:23.5px;font-weight:bold;color:#5b6c80;letter-spacing:1px">RATE, ERROR &amp; DURATION</div>
<svg style="left:2560px;top:323px" width="32" height="20" viewBox="0 0 32 20"><polyline points="3.5,15.5 11,7.5 17,12 27.5,3.5" fill="none" stroke="#3f6b8b" stroke-width="3" stroke-linejoin="round"/><circle cx="3.5" cy="15.5" r="2.3" fill="#3f6b8b"/><circle cx="27.5" cy="3.5" r="2.3" fill="#3f6b8b"/></svg>
<div class="t" style="left:2601.5px;top:321px;font-size:23px;font-weight:bold;color:#3f6b8b;letter-spacing:0.1px">Insights</div>
<div class="a" style="left:696px;top:370.7px;width:2025px;height:389.5px;background:#fdfdfe;border-radius:10px"></div>

<div class="a" style="left:708.6px;top:378px;width:661px;height:374.3px;border:1.8px solid #dfe1e2;border-radius:8px;background:#fff"></div>
<div class="t" style="left:720px;top:388.5px;font-size:26px;color:#151515">Rate</div>
<div class="a" style="left:1377.2px;top:378px;width:703.8px;height:374.3px;border:1.8px solid #dfe1e2;border-radius:8px;background:#fff"></div>
<div class="t" style="left:1390.8px;top:388.5px;font-size:26px;color:#151515">Errors</div>
<div class="a" style="left:2089.5px;top:378px;width:619.5px;height:374.3px;border:1.8px solid #dfe1e2;border-radius:8px;background:#fff"></div>
<div class="t" style="left:2101px;top:388.5px;font-size:26px;color:#151515">Duration</div>
<div class="t" style="left:1631.5px;width:200px;text-align:center;top:496.8px;font-size:25px;color:#141414">No Data</div>
<svg style="left:759.8px;top:452.9px" width="560.8" height="258" fill="none" stroke="#e0e6f1" stroke-width="2"><line x1="0" y1="1.0" x2="558.8" y2="1.0"/><line x1="0" y1="43.5" x2="558.8" y2="43.5"/><line x1="0" y1="86.0" x2="558.8" y2="86.0"/><line x1="0" y1="128.5" x2="558.8" y2="128.5"/><line x1="0" y1="171.0" x2="558.8" y2="171.0"/><line x1="0" y1="213.5" x2="558.8" y2="213.5"/><line x1="0" y1="256.0" x2="558.8" y2="256.0"/><line x1="1.0" y1="0" x2="1.0" y2="257"/><line x1="75.2" y1="0" x2="75.2" y2="257"/><line x1="149.3" y1="0" x2="149.3" y2="257"/><line x1="223.5" y1="0" x2="223.5" y2="257"/><line x1="297.7" y1="0" x2="297.7" y2="257"/><line x1="371.9" y1="0" x2="371.9" y2="257"/><line x1="446.0" y1="0" x2="446.0" y2="257"/><line x1="520.2" y1="0" x2="520.2" y2="257"/><line x1="557.8" y1="0" x2="557.8" y2="257"/></svg>
<div class="t" style="left:546.5px;width:200px;text-align:right;top:441.7px;font-size:22px;color:#60646e">3</div>
<div class="t" style="left:546.5px;width:200px;text-align:right;top:484.2px;font-size:22px;color:#60646e">3</div>
<div class="t" style="left:546.5px;width:200px;text-align:right;top:526.7px;font-size:22px;color:#60646e">2</div>
<div class="t" style="left:546.5px;width:200px;text-align:right;top:569.2px;font-size:22px;color:#60646e">2</div>
<div class="t" style="left:546.5px;width:200px;text-align:right;top:611.7px;font-size:22px;color:#60646e">1</div>
<div class="t" style="left:546.5px;width:200px;text-align:right;top:654.2px;font-size:22px;color:#60646e">1</div>
<div class="t" style="left:546.5px;width:200px;text-align:right;top:696.7px;font-size:22px;color:#60646e">0</div>
<div class="t" style="left:710.8px;width:100px;text-align:center;top:728.3px;font-size:22px;color:#60646e">14:36</div>
<div class="t" style="left:785.0px;width:100px;text-align:center;top:728.3px;font-size:22px;color:#60646e">14:38</div>
<div class="t" style="left:859.1px;width:100px;text-align:center;top:728.3px;font-size:22px;color:#60646e">14:40</div>
<div class="t" style="left:933.3px;width:100px;text-align:center;top:728.3px;font-size:22px;color:#60646e">14:42</div>
<div class="t" style="left:1007.5px;width:100px;text-align:center;top:728.3px;font-size:22px;color:#60646e">14:44</div>
<div class="t" style="left:1081.7px;width:100px;text-align:center;top:728.3px;font-size:22px;color:#60646e">14:46</div>
<div class="t" style="left:1155.8px;width:100px;text-align:center;top:728.3px;font-size:22px;color:#60646e">14:48</div>
<div class="t" style="left:1230.0px;width:100px;text-align:center;top:728.3px;font-size:22px;color:#60646e">14:50</div>
<svg style="left:2223px;top:452.9px" width="435.8" height="258" fill="none" stroke="#e0e6f1" stroke-width="2"><line x1="0" y1="1.0" x2="433.8" y2="1.0"/><line x1="0" y1="43.5" x2="433.8" y2="43.5"/><line x1="0" y1="86.0" x2="433.8" y2="86.0"/><line x1="0" y1="128.5" x2="433.8" y2="128.5"/><line x1="0" y1="171.0" x2="433.8" y2="171.0"/><line x1="0" y1="213.5" x2="433.8" y2="213.5"/><line x1="0" y1="256.0" x2="433.8" y2="256.0"/><line x1="1.0" y1="0" x2="1.0" y2="257"/><line x1="58.4" y1="0" x2="58.4" y2="257"/><line x1="115.9" y1="0" x2="115.9" y2="257"/><line x1="173.3" y1="0" x2="173.3" y2="257"/><line x1="230.7" y1="0" x2="230.7" y2="257"/><line x1="288.2" y1="0" x2="288.2" y2="257"/><line x1="345.6" y1="0" x2="345.6" y2="257"/><line x1="403.0" y1="0" x2="403.0" y2="257"/><line x1="432.8" y1="0" x2="432.8" y2="257"/></svg>
<div class="t" style="left:2009px;width:200px;text-align:right;top:441.7px;font-size:22px;color:#60646e">1.20ms</div>
<div class="t" style="left:2009px;width:200px;text-align:right;top:484.2px;font-size:22px;color:#60646e">1.00ms</div>
<div class="t" style="left:2009px;width:200px;text-align:right;top:526.7px;font-size:22px;color:#60646e">800.00µs</div>
<div class="t" style="left:2009px;width:200px;text-align:right;top:569.2px;font-size:22px;color:#60646e">600.00µs</div>
<div class="t" style="left:2009px;width:200px;text-align:right;top:611.7px;font-size:22px;color:#60646e">400.00µs</div>
<div class="t" style="left:2009px;width:200px;text-align:right;top:654.2px;font-size:22px;color:#60646e">200.00µs</div>
<div class="t" style="left:2009px;width:200px;text-align:right;top:696.7px;font-size:22px;color:#60646e">0.00ns</div>
<div class="t" style="left:2174.0px;width:100px;text-align:center;top:728.3px;font-size:22px;color:#60646e">14:36</div>
<div class="t" style="left:2231.4px;width:100px;text-align:center;top:728.3px;font-size:22px;color:#60646e">14:38</div>
<div class="t" style="left:2288.9px;width:100px;text-align:center;top:728.3px;font-size:22px;color:#60646e">14:40</div>
<div class="t" style="left:2346.3px;width:100px;text-align:center;top:728.3px;font-size:22px;color:#60646e">14:42</div>
<div class="t" style="left:2403.7px;width:100px;text-align:center;top:728.3px;font-size:22px;color:#60646e">14:44</div>
<div class="t" style="left:2461.2px;width:100px;text-align:center;top:728.3px;font-size:22px;color:#60646e">14:46</div>
<div class="t" style="left:2518.6px;width:100px;text-align:center;top:728.3px;font-size:22px;color:#60646e">14:48</div>
<div class="t" style="left:2576.0px;width:100px;text-align:center;top:728.3px;font-size:22px;color:#60646e">14:50</div>
<div class="a" style="left:2642.2px;top:483.9px;width:9.2px;height:9.2px;border-radius:50%;background:#e4593a"></div>
<div class="a" style="left:2642.2px;top:523.4px;width:9.2px;height:9.2px;border-radius:50%;background:#e8dc80"></div>
<div class="a" style="left:2642.2px;top:641.9px;width:9.2px;height:9.2px;border-radius:50%;background:#74b564"></div>
<!-- SPANS PANEL -->
<div class="a" style="left:688.7px;top:795px;width:2040px;height:760px;background:#fff;border-radius:14px;box-shadow:0 0 5px rgba(0,0,0,.05)"></div>
<div class="t" style="left:704px;top:821px;font-size:23px;font-weight:bold;color:#4a5568;letter-spacing:1.2px">SPANS</div>
<div class="a" style="left:814.6px;top:809.7px;width:197.2px;height:44.7px;border-radius:8px;background:#e2e8f0"></div>
<div class="t" style="left:814.6px;width:197.2px;text-align:center;top:821px;font-size:23px;color:#4a5568;letter-spacing:0.25px">3 Spans Found</div>
<div class="a" style="left:2469.6px;top:810px;width:93.4px;height:43.4px;border-radius:8px;border:1.5px solid #d9d9d9;background:#fff"></div>
<div class="t" style="left:2485px;top:820.2px;font-size:24px;color:#1a1a1a">25</div>
<svg style="left:2526px;top:829px" width="12" height="7" viewBox="0 0 12 7"><path d="M0 0H12L6 6.5Z" fill="#666"/></svg>
<svg style="left:2584px;top:823px" width="25" height="18" viewBox="0 0 25 18" fill="#8aa3b7"><path d="M12 1L2 9L12 17ZM23 1L13 9L23 17Z"/></svg>
<div class="a" style="left:2620px;top:812px;width:44.8px;height:40.6px;border-radius:7px;background:#4f7892"></div>
<div class="t" style="left:2620px;width:44.8px;text-align:center;top:820.5px;font-size:23px;color:#fff">1</div>
<svg style="left:2676px;top:823px" width="25" height="18" viewBox="0 0 25 18" fill="#8aa3b7"><path d="M2 1L12 9L2 17ZM13 1L23 9L13 17Z"/></svg>
<div class="a" style="left:688.7px;top:868.8px;width:2040px;height:51.8px;background:#c8d7df"></div>

<div class="t" style="left:704px;top:879.7px;font-size:26px;font-weight:bold;color:#3b475a;letter-spacing:1.1px">Timestamp</div>
<svg style="left:860.8px;top:885.5px" width="10" height="20" viewBox="0 0 10 20" fill="none" stroke="#8e99a5" stroke-width="1.8"><path d="M1 6.5L5 2.5L9 6.5M1 13.5L5 17.5L9 13.5"/></svg>
<div class="t" style="left:1004px;top:879.7px;font-size:26px;font-weight:bold;color:#3b475a;letter-spacing:1.1px">Service</div>
<svg style="left:1110.8px;top:885.5px" width="10" height="20" viewBox="0 0 10 20" fill="none" stroke="#8e99a5" stroke-width="1.8"><path d="M1 6.5L5 2.5L9 6.5M1 13.5L5 17.5L9 13.5"/></svg>
<div class="t" style="left:1304px;top:879.7px;font-size:26px;font-weight:bold;color:#3b475a;letter-spacing:1.1px">Operation Name</div>
<svg style="left:1535px;top:885.5px" width="10" height="20" viewBox="0 0 10 20" fill="none" stroke="#8e99a5" stroke-width="1.8"><path d="M1 6.5L5 2.5L9 6.5M1 13.5L5 17.5L9 13.5"/></svg>
<div class="t" style="left:1678.5px;top:879.7px;font-size:26px;font-weight:bold;color:#3b475a;letter-spacing:1.1px">Duration</div>
<svg style="left:1804.4px;top:885.5px" width="10" height="20" viewBox="0 0 10 20" fill="none" stroke="#8e99a5" stroke-width="1.8"><path d="M1 6.5L5 2.5L9 6.5M1 13.5L5 17.5L9 13.5"/></svg>
<div class="t" style="left:1906px;top:879.7px;font-size:26px;font-weight:bold;color:#3b475a;letter-spacing:1.1px">Span Status</div>
<svg style="left:2077px;top:885.5px" width="10" height="20" viewBox="0 0 10 20" fill="none" stroke="#8e99a5" stroke-width="1.8"><path d="M1 6.5L5 2.5L9 6.5M1 13.5L5 17.5L9 13.5"/></svg>
<div class="t" style="left:2149px;top:879.7px;font-size:26px;font-weight:bold;color:#3b475a;letter-spacing:1.1px">Status Code</div>
<svg style="left:2322px;top:885.5px" width="10" height="20" viewBox="0 0 10 20" fill="none" stroke="#8e99a5" stroke-width="1.8"><path d="M1 6.5L5 2.5L9 6.5M1 13.5L5 17.5L9 13.5"/></svg>
<div class="t" style="left:2443px;top:879.7px;font-size:26px;font-weight:bold;color:#3b475a;letter-spacing:1.1px">Method</div>
<svg style="left:2553px;top:885.5px" width="10" height="20" viewBox="0 0 10 20" fill="none" stroke="#8e99a5" stroke-width="1.8"><path d="M1 6.5L5 2.5L9 6.5M1 13.5L5 17.5L9 13.5"/></svg>
<div class="a" style="left:688.7px;top:973.0px;width:2040px;height:2px;background:#e6e9ee"></div>
<div class="t m" style="left:703px;top:937.1px;font-size:23.6px;color:#4d5b70">Today 02:50:48 PM</div>
<div class="a" style="left:1005.2px;top:930.3px;width:34px;height:34px;border-radius:50%;border:2.6px solid #3d7ff2"></div>
<svg style="left:1014.5px;top:939.3px" width="16" height="16" viewBox="0 0 16 16" fill="none" stroke="#2b2b2b" stroke-width="1.6"><rect x="1" y="1" width="14" height="6" rx="2"/><rect x="1" y="9" width="14" height="6" rx="2"/><circle cx="4" cy="4" r=".6" fill="#2b2b2b"/><circle cx="4" cy="12" r=".6" fill="#2b2b2b"/></svg>
<div class="t m" style="left:1055px;top:937.1px;font-size:23.6px;font-weight:bold;color:#4d5b70;width:233.5px;overflow:hidden;letter-spacing:1.3px">langchain-rag-demo</div>
<div class="t m" style="left:1304.5px;top:937.1px;font-size:23.6px;color:#4d5b70">feedback</div>
<div class="t m" style="left:1677.5px;top:937.1px;font-size:23.6px;color:#1e293b">291.00us</div>
<div class="a" style="left:1939px;top:931.6px;width:123px;height:31.3px;border-radius:6px;background:#eeeeee"></div>
<div class="a" style="left:1958.2px;top:941.8px;width:11px;height:11px;border-radius:50%;background:#7a7a7a"></div>
<div class="t m" style="left:1976px;top:937.9px;font-size:22.5px;font-weight:bold;color:#787878">UNSET</div>
<div class="a" style="left:2237px;top:946.3px;width:14.5px;height:2px;background:#8a8a8a"></div>
<div class="a" style="left:2498px;top:946.1px;width:15px;height:2.2px;background:#222"></div>
<div class="a" style="left:688.7px;top:1027.2px;width:2040px;height:2px;background:#e6e9ee"></div>
<div class="t m" style="left:703px;top:991.4px;font-size:23.6px;color:#4d5b70">Today 02:50:47 PM</div>
<div class="a" style="left:1005.2px;top:984.6px;width:34px;height:34px;border-radius:50%;border:2.6px solid #3d7ff2"></div>
<svg style="left:1014.5px;top:993.6px" width="16" height="16" viewBox="0 0 16 16" fill="none" stroke="#2b2b2b" stroke-width="1.6"><rect x="1" y="1" width="14" height="6" rx="2"/><rect x="1" y="9" width="14" height="6" rx="2"/><circle cx="4" cy="4" r=".6" fill="#2b2b2b"/><circle cx="4" cy="12" r=".6" fill="#2b2b2b"/></svg>
<div class="t m" style="left:1055px;top:991.4px;font-size:23.6px;font-weight:bold;color:#4d5b70;width:233.5px;overflow:hidden;letter-spacing:1.3px">langchain-rag-demo</div>
<div class="t m" style="left:1304.5px;top:991.4px;font-size:23.6px;color:#4d5b70">feedback</div>
<div class="t m" style="left:1677.5px;top:991.4px;font-size:23.6px;color:#1e293b">273.00us</div>
<div class="a" style="left:1939px;top:985.9px;width:123px;height:31.3px;border-radius:6px;background:#eeeeee"></div>
<div class="a" style="left:1958.2px;top:996.1px;width:11px;height:11px;border-radius:50%;background:#7a7a7a"></div>
<div class="t m" style="left:1976px;top:992.2px;font-size:22.5px;font-weight:bold;color:#787878">UNSET</div>
<div class="a" style="left:2237px;top:1000.6px;width:14.5px;height:2px;background:#8a8a8a"></div>
<div class="a" style="left:2498px;top:1000.4px;width:15px;height:2.2px;background:#222"></div>
<div class="a" style="left:688.7px;top:1081.5px;width:2040px;height:2px;background:#e6e9ee"></div>
<div class="t m" style="left:703px;top:1045.7px;font-size:23.6px;color:#4d5b70">Today 02:50:45 PM</div>
<div class="a" style="left:1005.2px;top:1038.9px;width:34px;height:34px;border-radius:50%;border:2.6px solid #3d7ff2"></div>
<svg style="left:1014.5px;top:1047.9px" width="16" height="16" viewBox="0 0 16 16" fill="none" stroke="#2b2b2b" stroke-width="1.6"><rect x="1" y="1" width="14" height="6" rx="2"/><rect x="1" y="9" width="14" height="6" rx="2"/><circle cx="4" cy="4" r=".6" fill="#2b2b2b"/><circle cx="4" cy="12" r=".6" fill="#2b2b2b"/></svg>
<div class="t m" style="left:1055px;top:1045.7px;font-size:23.6px;font-weight:bold;color:#4d5b70;width:233.5px;overflow:hidden;letter-spacing:1.3px">langchain-rag-demo</div>
<div class="t m" style="left:1304.5px;top:1045.7px;font-size:23.6px;color:#4d5b70">feedback</div>
<div class="t m" style="left:1677.5px;top:1045.7px;font-size:23.6px;color:#1e293b">1.03ms</div>
<div class="a" style="left:1939px;top:1040.1px;width:123px;height:31.3px;border-radius:6px;background:#eeeeee"></div>
<div class="a" style="left:1958.2px;top:1050.4px;width:11px;height:11px;border-radius:50%;background:#7a7a7a"></div>
<div class="t m" style="left:1976px;top:1046.5px;font-size:22.5px;font-weight:bold;color:#787878">UNSET</div>
<div class="a" style="left:2237px;top:1054.9px;width:14.5px;height:2px;background:#8a8a8a"></div>
<div class="a" style="left:2498px;top:1054.7px;width:15px;height:2.2px;background:#222"></div>
<svg style="left:1541.6px;top:1041.4px" width="29.4" height="29.4" viewBox="0 0 24 24" fill="#4a5d78"><path d="M16 1H4c-1.1 0-2 .9-2 2v14h2V3h12V1zm3 4H8c-1.1 0-2 .9-2 2v14c0 1.1.9 2 2 2h11c1.1 0 2-.9 2-2V7c0-1.1-.9-2-2-2zm0 16H8V7h11v14z"/></svg>
<svg style="left:1588px;top:1045px" width="60" height="22" viewBox="0 0 60 22" fill="none" stroke="#4a5d78" stroke-width="2.2"><path d="M2.2 7.7H16.9M2.2 14.4H16.9M43.1 7.7H57.8M43.1 14.4H57.8M54.3 4.2L46.3 18.2"/></svg>
</body></html>
